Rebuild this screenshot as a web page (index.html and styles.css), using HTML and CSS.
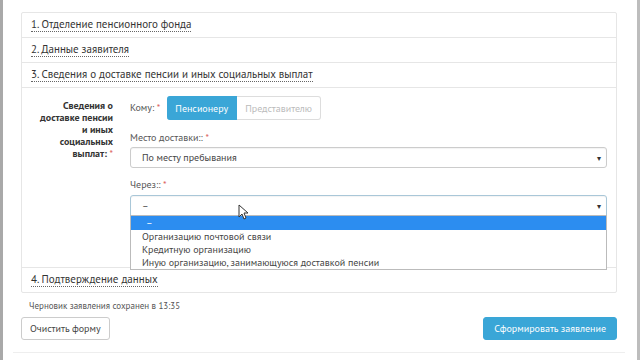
FILE: index.html
```html
<!DOCTYPE html>
<html lang="ru">
  <head>
    <meta charset="UTF-8" />
    <title>Заявление</title>
    <link rel="stylesheet" href="styles.css">
  </head>
  <body>
    <div class="page">
      <section class="accordion">
        <div class="acc-row"><span class="acc-title">1. Отделение пенсионного фонда</span></div>
        <div class="acc-row"><span class="acc-title">2. Данные заявителя</span></div>
        <div class="acc-row"><span class="acc-title">3. Сведения о доставке пенсии и иных социальных выплат</span></div>

        <div class="acc-body">
          <div class="group-label">Сведения о<br>доставке пенсии<br>и иных<br>социальных<br>выплат: <span class="req">*</span></div>
          <div class="fields">
            <div class="inline-field">
              <span class="label">Кому: <span class="req">*</span></span>
              <div class="toggle">
                <span class="toggle-btn active">Пенсионеру</span>
                <span class="toggle-btn">Представителю</span>
              </div>
            </div>

            <div class="field">
              <div class="label">Место доставки:: <span class="req">*</span></div>
              <div class="select"><span>По месту пребывания</span><span class="caret">▾</span></div>
            </div>

            <div class="field">
              <div class="label">Через:: <span class="req">*</span></div>
              <div class="select-wrap">
                <div class="select focused"><span>–</span><span class="caret">▾</span></div>
                <ul class="dropdown">
                  <li class="selected">–</li>
                  <li>Организацию почтовой связи</li>
                  <li>Кредитную организацию</li>
                  <li>Иную организацию, занимающуюся доставкой пенсии</li>
                </ul>
                <svg class="cursor" width="11" height="16" viewBox="0 0 11 16">
                  <path d="M1 1 L1 13 L4 10 L6 15 L8 14 L6 9 L10 9 Z" fill="#fff" stroke="#333" stroke-width="1" />
                </svg>
              </div>
            </div>
          </div>
        </div>

        <div class="acc-row last"><span class="acc-title">4. Подтверждение данных</span></div>
      </section>

      <p class="draft">Черновик заявления сохранен в 13:35</p>

      <div class="actions">
        <button class="btn">Очистить форму</button>
        <button class="btn btn-primary">Сформировать заявление</button>
      </div>
      <div class="bottom-line"></div>
    </div>
  </body>
</html>
```

FILE: styles.css
```css
*,
*::before,
*::after {
  box-sizing: border-box;
}
:root {
  --text: #333;
  --line: #e6e6e6;
  --blue: #3aa6d7;
  --req: #d9534f;
}
body {
  margin: 0;
  font-family: "PT Sans", "Roboto Condensed", "Noto Sans", sans-serif;
  color: var(--text);
  background: #fff;
}
.page {
  height: 360px;
  border-left: 3px solid #a9a9a9;
  border-right: 3px solid #bdbdbd;
  padding: 12px 20px 0 18px;
}
.accordion {
  border: 1px solid var(--line);
  border-radius: 2px;
}
.acc-row {
  height: 25px;
  display: flex;
  align-items: center;
  padding-left: 9px;
  border-bottom: 1px solid var(--line);
  font-size: 11px;
}
.acc-row.last {
  border-bottom: none;
  border-top: 1px solid var(--line);
}
.acc-title {
  border-bottom: 1px dotted #666;
  line-height: 13px;
}
.acc-body {
  display: flex;
  height: 179px;
  padding: 8px 9px 0 0;
}
.group-label {
  width: 91px;
  text-align: right;
  font-size: 10px;
  font-weight: 700;
  line-height: 12px;
  padding-top: 4px;
  color: #333;
}
.req {
  color: var(--req);
  font-weight: 400;
}
.fields {
  flex: 1;
  margin-left: 17px;
}
.label {
  font-size: 10px;
  line-height: 12px;
  color: #555;
}
.inline-field {
  display: flex;
  align-items: center;
  gap: 7px;
}
.toggle {
  display: flex;
}
.toggle-btn {
  height: 24px;
  display: flex;
  align-items: center;
  padding: 0 8px;
  font-size: 10px;
  color: #bbb;
  border: 1px solid #ddd;
  border-left: none;
  border-radius: 0 3px 3px 0;
}
.toggle-btn.active {
  background: var(--blue);
  border-color: var(--blue);
  color: #fff;
  border-radius: 3px 0 0 3px;
}
.field {
  margin-top: 12px;
}
.field .label {
  margin-bottom: 3px;
}
.field + .field {
  margin-top: 11px;
}
.field + .field .label {
  margin-bottom: 4px;
}
.select {
  height: 21px;
  border: 1px solid #ccc;
  border-radius: 3px;
  display: flex;
  align-items: center;
  justify-content: space-between;
  padding: 0 5px 0 11px;
  font-size: 10px;
  color: #444;
  box-shadow: inset 0 1px 1px rgba(0, 0, 0, 0.05);
}
.select.focused {
  border-color: #a9c7d8;
  border-radius: 3px 3px 0 0;
}
.caret {
  font-size: 8px;
  color: #333;
}
.select-wrap {
  position: relative;
}
.dropdown {
  position: absolute;
  top: 20px;
  left: 0;
  right: 0;
  margin: 0;
  padding: 0;
  list-style: none;
  background: #fff;
  border: 1px solid #bbb;
  font-size: 10px;
  color: #444;
  z-index: 2;
}
.dropdown li {
  line-height: 13px;
  padding-left: 11px;
}
.dropdown li.selected {
  background: #2c8df0;
  color: #fff;
  line-height: 14px;
  padding-left: 15px;
}
.cursor {
  position: absolute;
  left: 108px;
  top: 9px;
  z-index: 3;
}
.draft {
  margin: 7px 0 0 8px;
  font-size: 9px;
  color: #555;
}
.actions {
  display: flex;
  justify-content: space-between;
  margin-top: 6px;
}
.btn {
  font-family: inherit;
  font-size: 10px;
  height: 23px;
  padding: 0 8px;
  border: 1px solid #ccc;
  border-radius: 3px;
  background: #fff;
  color: #444;
}
.btn-primary {
  background: var(--blue);
  border-color: var(--blue);
  color: #fff;
  padding: 0 10px;
}
.bottom-line {
  margin: 12px -8px 0 -8px;
  border-top: 1px solid #eee;
}
```
